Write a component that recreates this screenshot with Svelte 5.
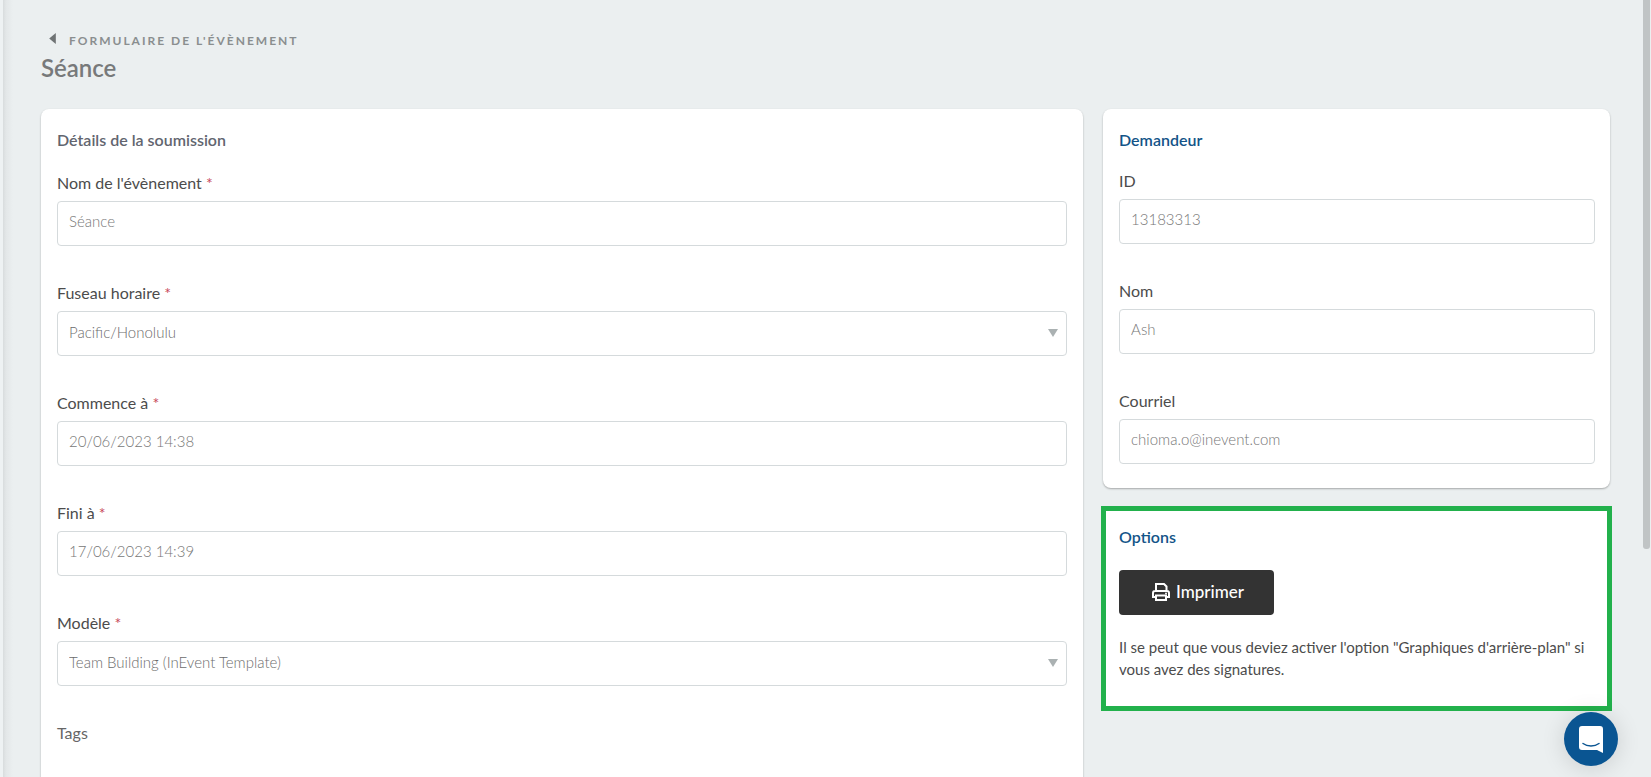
<script lang="ts">
  interface Field {
    id: string;
    label: string;
    value: string;
    type: 'text' | 'email' | 'select';
  }

  const submission: Field[] = [
    { id: 'event-name', label: "Nom de l'évènement", value: 'Séance', type: 'text' },
    { id: 'timezone', label: 'Fuseau horaire', value: 'Pacific/Honolulu', type: 'select' },
    { id: 'starts', label: 'Commence à', value: '20/06/2023 14:38', type: 'text' },
    { id: 'ends', label: 'Fini à', value: '17/06/2023 14:39', type: 'text' },
    { id: 'template', label: 'Modèle', value: 'Team Building (InEvent Template)', type: 'select' }
  ];

  const requester: Field[] = [
    { id: 'requester-id', label: 'ID', value: '13183313', type: 'text' },
    { id: 'requester-name', label: 'Nom', value: 'Ash', type: 'text' },
    { id: 'requester-email', label: 'Courriel', value: 'chioma.o@inevent.com', type: 'email' }
  ];
</script>

{#snippet field(item: Field, required: boolean)}
  <div class="field">
    <label for={item.id}>
      {item.label}
      {#if required}<span class="required">*</span>{/if}
    </label>
    {#if item.type === 'select'}
      <div class="select">
        <select id={item.id}>
          <option>{item.value}</option>
        </select>
        <svg class="caret" viewBox="0 0 10 8" aria-hidden="true"><path d="M0 0h10L5 8z" /></svg>
      </div>
    {:else}
      <input id={item.id} type={item.type} value={item.value} readonly />
    {/if}
  </div>
{/snippet}

<div class="app">
  <div class="rail"></div>

  <main>
    <header>
      <a class="crumb" href="#forms">
        <svg viewBox="0 0 6 10" aria-hidden="true"><path d="M6 0v10L0 5z" /></svg>
        Formulaire de l'évènement
      </a>
      <h1>Séance</h1>
    </header>

    <div class="columns">
      <section class="card details">
        <h2>Détails de la soumission</h2>
        {#each submission as item (item.id)}
          {@render field(item, true)}
        {/each}
        <div class="tags">Tags</div>
      </section>

      <div class="side">
        <section class="card requester">
          <h2>Demandeur</h2>
          {#each requester as item (item.id)}
            {@render field(item, false)}
          {/each}
        </section>

        <section class="options">
          <h2>Options</h2>
          <button type="button" class="print">
            <svg viewBox="0 0 18 18" aria-hidden="true">
              <path d="M4 8V1h8l2.500 2.500V8M4 14H1V10a2 2 0 0 1 2-2h12a2 2 0 0 1 2 2v4h-3M4 12.500h10V17H4z" />
              <circle cx="14" cy="10.500" r="1" />
            </svg>
            Imprimer
          </button>
          <p>
            Il se peut que vous deviez activer l'option "Graphiques d'arrière-plan" si vous avez des
            signatures.
          </p>
        </section>
      </div>
    </div>
  </main>

  <div class="scroll-thumb"></div>

  <button type="button" class="chat" aria-label="Chat">
    <svg viewBox="0 0 24 27" aria-hidden="true">
      <path class="bubble" d="M3 0h18a3 3 0 0 1 3 3v24l-6-3H3a3 3 0 0 1-3-3V3a3 3 0 0 1 3-3z" />
      <path class="smile" d="M4 17.500c4.500 3.300 11.500 3.300 16 0" />
    </svg>
  </button>
</div>

<style>
  :global(body) {
    overflow: hidden;
    background: #ebeff0;
  }

  .app {
    display: flex;
    height: 100vh;
    overflow: hidden;
    font-family: Lato, 'Open Sans', sans-serif;
    font-size: 16px;
    color: #4c4c4c;
  }

  .rail {
    flex: 0 0 3px;
    background: #eef2f3;
  }

  main {
    flex: 1;
    min-width: 0;
    padding: 31px 41px 0 38px;
    background: linear-gradient(to right, #d8dcdd, #e3e7e8 3px, #ebeff0 10px);
  }

  header {
    height: 78px;
  }

  .crumb {
    display: flex;
    align-items: center;
    gap: 14px;
    padding-left: 8px;
    line-height: 20px;
    font-size: 12px;
    font-weight: 700;
    letter-spacing: 2px;
    text-transform: uppercase;
    text-decoration: none;
    color: #8a8e8f;
  }

  .crumb svg {
    width: 7px;
    height: 11px;
    margin-bottom: 5px;
    margin-right: -1px;
    fill: #6f7374;
  }

  h1 {
    margin: 1px 0 0;
    font-size: 24px;
    line-height: 32px;
    font-weight: 600;
    color: #77797a;
  }

  h2 {
    margin: 0 0 14px;
    font-size: 16px;
    line-height: 30px;
    font-weight: 600;
    color: #135488;
  }

  .columns {
    display: grid;
    grid-template-columns: 37fr 18fr;
    align-items: start;
    gap: 20px;
  }

  .card {
    padding: 16px 15px 24px 16px;
    border-radius: 8px;
    background: #fff;
    box-shadow: 0 1px 2px rgba(0, 0, 0, 0.3);
  }

  .details {
    padding-right: 16px;
  }

  .details h2 {
    margin-bottom: 16px;
    color: #62656f;
  }

  .field {
    margin-bottom: 35px;
  }

  .requester .field:last-child {
    margin-bottom: 0;
  }

  label,
  .tags {
    display: block;
    margin-bottom: 6px;
    line-height: 24px;
  }

  .tags {
    min-height: 120px;
    color: #666;
  }

  .required {
    color: #c8485a;
  }

  input,
  select {
    display: block;
    box-sizing: border-box;
    width: 100%;
    height: 45px;
    padding: 0 11px 6px;
    border: 1px solid #d5dadc;
    border-radius: 4px;
    outline: none;
    background: #fff;
    font-family: inherit;
    font-size: 15px;
    font-weight: 300;
    color: #777;
  }

  select {
    appearance: none;
    padding-bottom: 4px;
    color: #6c6c6c;
  }

  .select {
    position: relative;
  }

  .caret {
    position: absolute;
    top: 18px;
    right: 9px;
    width: 10px;
    height: 8px;
    fill: #aab1b2;
    pointer-events: none;
  }

  .options {
    margin: 18px -2px 0;
    padding: 11px 13px 26px;
    border: 5px solid #22b14c;
    background: #fff;
  }

  .options h2 {
    margin-bottom: 18px;
  }

  .options p {
    margin: 21px 0 0;
    font-size: 15px;
    line-height: 22px;
  }

  .print {
    display: flex;
    align-items: center;
    gap: 6px;
    height: 45px;
    padding: 0 30px 2px 33px;
    border: none;
    border-radius: 4px;
    background: #333;
    font-family: inherit;
    font-size: 17px;
    font-weight: 500;
    color: #fff;
    cursor: pointer;
  }

  .print svg {
    width: 18px;
    height: 18px;
    fill: none;
    stroke: #fff;
    stroke-width: 2;
  }

  .print circle {
    fill: #fff;
    stroke: none;
  }

  .scroll-thumb {
    position: fixed;
    top: 0;
    right: 1px;
    bottom: 228px;
    width: 7px;
    border-radius: 0 0 3px 3px;
    background: #c0c4c5;
  }

  .chat {
    position: fixed;
    right: 33px;
    bottom: 11px;
    display: grid;
    place-items: center;
    width: 54px;
    height: 54px;
    padding: 0;
    border: none;
    border-radius: 50%;
    background: #0a5592;
    box-shadow: 0 2px 24px rgba(0, 0, 0, 0.14);
    cursor: pointer;
  }

  .chat svg {
    width: 24px;
    height: 27px;
  }

  .bubble {
    fill: #fff;
  }

  .smile {
    fill: none;
    stroke: #0a5592;
    stroke-width: 1.5;
    stroke-linecap: round;
  }
</style>
